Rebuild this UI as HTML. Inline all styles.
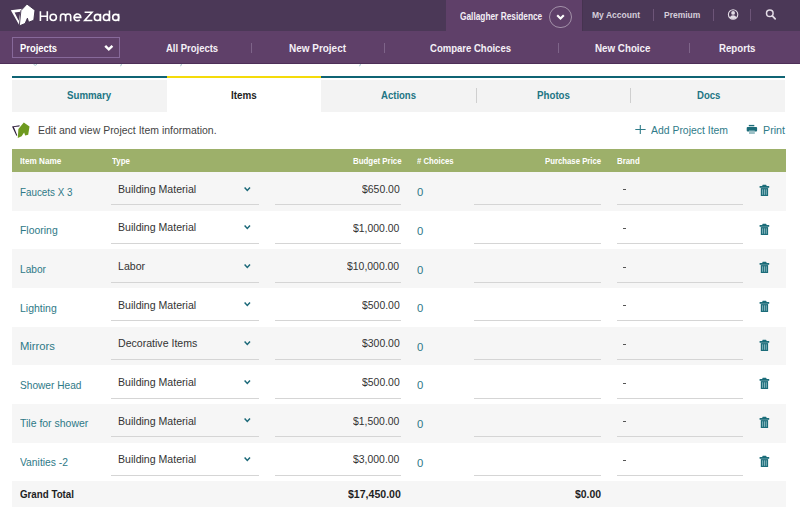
<!DOCTYPE html>
<html><head><meta charset="utf-8">
<style>
*{margin:0;padding:0;box-sizing:border-box}
html,body{width:800px;height:513px;overflow:hidden;background:#fff;font-family:"Liberation Sans",sans-serif}
body{position:relative}
.a{position:absolute}
.t{position:absolute;white-space:nowrap;line-height:normal;transform-origin:0 0}
</style></head><body>

<div class="a" style="left:0px;top:0px;width:800px;height:31px;background:#4b3857;"></div>
<div class="a" style="left:0px;top:31px;width:800px;height:32.5px;background:#5f4069;"></div>
<div class="a" style="left:0px;top:62.5px;width:800px;height:1px;background:#4d2f58;"></div>
<div class="a" style="left:446px;top:0px;width:136px;height:31px;background:#5f4069;"></div>
<svg class="a" style="left:0;top:62px" width="400" height="6" viewBox="0 62 400 6"><g fill="none" stroke="#7fb0ba" stroke-width="0.9" opacity="0.8">
<path d="M33.5 64.3 Q35.2 66.3 37 64.3"/><path d="M121.5 64 L120.6 66.2"/><path d="M181.5 64 L180.6 66.2"/><path d="M360.5 64 L359.6 66.2"/>
</g></svg>
<svg class="a" style="left:0;top:0" width="40" height="31" viewBox="0 0 40 31">
<path fill-rule="evenodd" d="M10.8 10.2 L22.8 8.7 L19.6 25.8 Z M14.6 12.4 L20.4 11.8 L18.7 20.8 Z" fill="#fff"/>
<path d="M20.9 10.6 L27 4.1 L35 10.2 L33.8 20.2 L28.6 22.3 L27.4 18.2 L25.1 23.5 L19.3 25.9 Z" fill="#fff" stroke="#3a2a46" stroke-width="0.9"/>
</svg>
<svg class="a" style="left:30px;top:5px" width="95" height="20" viewBox="30 5 95 20"><g fill="none" stroke="#fff" stroke-width="1.6">
<path d="M40.4 11.3 V20.9 M47.3 11.3 V20.9 M40.4 16.3 H47.3"/>
<circle cx="53.25" cy="17.35" r="3.15"/>
<path d="M60.5 21.2 V16.6 A2.55 2.55 0 0 1 65.6 16.6 V21.2 M65.6 16.6 A2.55 2.55 0 0 1 70.7 16.6 V21.2"/>
<path d="M74.0 17.4 H80.8 A3.4 3.4 0 1 0 79.8 19.8"/>
<path d="M84.6 12.3 H92 L84.7 20.5 H92.4"/>
<circle cx="97.4" cy="17.4" r="3.05"/><path d="M100.45 13.8 V21.2"/>
<circle cx="106.4" cy="17.4" r="3.05"/><path d="M109.45 10.5 V21.2"/>
<circle cx="115.7" cy="17.4" r="3.0"/><path d="M118.6 13.8 V21.2"/>
</g></svg>
<div class="t" style="left:459.50px;top:10.97px;font-size:10.47px;color:#f3eef5;font-weight:bold;transform:scaleX(0.7938)">Gallagher Residence</div>
<div class="a" style="left:549px;top:5.5px;width:22.5px;height:22.5px;border-radius:50%;border:1.3px solid rgba(255,255,255,0.42)"></div>
<svg class="a" style="left:555px;top:13px" width="11" height="9" viewBox="0 0 11 9"><path d="M2.2 2.2 L5.5 5.5 L8.8 2.2" stroke="#fff" stroke-width="2.1" fill="none"/></svg>
<div class="a" style="left:582px;top:0px;width:1px;height:31px;background:#463350;"></div>
<div class="t" style="left:592.10px;top:9.97px;font-size:9.30px;color:#d6cedb;font-weight:bold;transform:scaleX(0.9165)">My Account</div>
<div class="t" style="left:664.20px;top:9.97px;font-size:9.30px;color:#d6cedb;font-weight:bold;transform:scaleX(0.9117)">Premium</div>
<div class="a" style="left:653.3px;top:9px;width:1px;height:12px;background:#6d5578;"></div>
<div class="a" style="left:713.3px;top:9px;width:1px;height:12px;background:#6d5578;"></div>
<div class="a" style="left:750.3px;top:9px;width:1px;height:12px;background:#6d5578;"></div>
<svg class="a" style="left:722px;top:4px" width="60" height="22" viewBox="722 4 60 22">
<circle cx="733.1" cy="14.5" r="4.7" fill="none" stroke="#e3dce6" stroke-width="1.1"/>
<circle cx="733.1" cy="12.9" r="1.9" fill="#e3dce6"/><path d="M729.9 18.3 Q730.2 15.2 733.1 15.2 Q736 15.2 736.3 18.3 Q733.1 19.6 729.9 18.3 Z" fill="#e3dce6"/>
<circle cx="769.8" cy="13.3" r="3.3" fill="none" stroke="#e3dce6" stroke-width="1.5"/><path d="M772.3 15.9 L775.2 18.9" stroke="#e3dce6" stroke-width="1.7" stroke-linecap="round"/>
</svg>
<div class="a" style="left:11.75px;top:37.25px;width:108.5px;height:21px;border:1px solid #87699a"></div>
<div class="t" style="left:19.70px;top:41.62px;font-size:10.90px;color:#fff;font-weight:bold;transform:scaleX(0.8615)">Projects</div>
<svg class="a" style="left:102px;top:43px" width="13" height="10" viewBox="0 0 13 10"><path d="M3.2 2.8 L6.8 6.4 L10.4 2.8" stroke="#fff" stroke-width="2.4" fill="none"/></svg>
<div class="t" style="left:166.00px;top:41.59px;font-size:11.05px;color:#f5f0f7;font-weight:bold;transform:scaleX(0.8575)">All Projects</div>
<div class="t" style="left:288.70px;top:41.59px;font-size:11.05px;color:#f5f0f7;font-weight:bold;transform:scaleX(0.9013)">New Project</div>
<div class="t" style="left:430.00px;top:41.59px;font-size:11.05px;color:#f5f0f7;font-weight:bold;transform:scaleX(0.8622)">Compare Choices</div>
<div class="t" style="left:595.00px;top:41.59px;font-size:11.05px;color:#f5f0f7;font-weight:bold;transform:scaleX(0.8861)">New Choice</div>
<div class="t" style="left:718.50px;top:41.59px;font-size:11.05px;color:#f5f0f7;font-weight:bold;transform:scaleX(0.8741)">Reports</div>
<div class="a" style="left:251px;top:42.5px;width:1px;height:10px;background:#7e6489;"></div>
<div class="a" style="left:384px;top:42.5px;width:1px;height:10px;background:#7e6489;"></div>
<div class="a" style="left:558px;top:42.5px;width:1px;height:10px;background:#7e6489;"></div>
<div class="a" style="left:688.5px;top:42.5px;width:1px;height:10px;background:#7e6489;"></div>
<div class="a" style="left:12px;top:75.9px;width:154.6px;height:2.5px;background:#0f6474;"></div>
<div class="a" style="left:12px;top:80px;width:154.6px;height:32px;background:#f3f3f3;"></div>
<div class="t" style="left:66.80px;top:89.36px;font-size:11.19px;color:#217583;font-weight:bold;transform:scaleX(0.8661)">Summary</div>
<div class="a" style="left:166.6px;top:75.9px;width:154.6px;height:2.5px;background:#f4db0a;"></div>
<div class="a" style="left:166.6px;top:80px;width:154.6px;height:32px;background:#ffffff;"></div>
<div class="t" style="left:231.25px;top:89.36px;font-size:11.19px;color:#1d1d1d;font-weight:bold;transform:scaleX(0.8815)">Items</div>
<div class="a" style="left:321.2px;top:75.9px;width:154.6px;height:2.5px;background:#0f6474;"></div>
<div class="a" style="left:321.2px;top:80px;width:154.6px;height:32px;background:#f3f3f3;"></div>
<div class="t" style="left:381.25px;top:89.36px;font-size:11.19px;color:#217583;font-weight:bold;transform:scaleX(0.8533)">Actions</div>
<div class="a" style="left:475.8px;top:75.9px;width:154.6px;height:2.5px;background:#0f6474;"></div>
<div class="a" style="left:475.8px;top:80px;width:154.6px;height:32px;background:#f3f3f3;"></div>
<div class="t" style="left:537.00px;top:89.36px;font-size:11.19px;color:#217583;font-weight:bold;transform:scaleX(0.8698)">Photos</div>
<div class="a" style="left:630.4px;top:75.9px;width:154.6px;height:2.5px;background:#0f6474;"></div>
<div class="a" style="left:630.4px;top:80px;width:154.6px;height:32px;background:#f3f3f3;"></div>
<div class="t" style="left:696.60px;top:89.36px;font-size:11.19px;color:#217583;font-weight:bold;transform:scaleX(0.8551)">Docs</div>
<div class="a" style="left:475.8px;top:88px;width:1px;height:15px;background:#cfcfcf;"></div>
<div class="a" style="left:630.4px;top:88px;width:1px;height:15px;background:#cfcfcf;"></div>
<svg class="a" style="left:8px;top:116px" width="30" height="28" viewBox="8 116 30 28">
<path d="M18.4 129.1 L23.8 122.5 L29.5 126.4 L28.2 134.8 L25.2 135.6 L24.1 132.4 L21.6 136.2 L17.8 138.1 Z" fill="#6e9a1f"/>
<path d="M12 126.4 L19.7 125.3 L19.3 126.4 L13.9 127.1 L17.3 135.6 L16.4 135.8 Z" fill="#2e1d3b"/>
</svg>
<div class="t" style="left:38.00px;top:123.69px;font-size:10.61px;color:#444444;transform:scaleX(0.9864)">Edit and view Project Item information.</div>
<svg class="a" style="left:634px;top:124px" width="13" height="12" viewBox="0 0 13 12"><path d="M6.3 1 V10 M1.3 5.5 H11.6" stroke="#2f7b89" stroke-width="1.1"/></svg>
<div class="t" style="left:651.00px;top:123.59px;font-size:11.05px;color:#2f7b89;transform:scaleX(0.9432)">Add Project Item</div>
<svg class="a" style="left:742px;top:120px" width="20" height="18" viewBox="742 120 20 18">
<rect x="748.8" y="124.9" width="5.5" height="1.4" fill="#1c6c79"/>
<rect x="746.7" y="127" width="10.4" height="4.6" rx="1" fill="#1c6c79"/>
<rect x="749" y="130.5" width="5.8" height="3.5" fill="#9cc0c6"/>
</svg>
<div class="t" style="left:763.00px;top:123.59px;font-size:11.05px;color:#2f7b89;transform:scaleX(0.9691)">Print</div>
<div class="a" style="left:12px;top:149px;width:773.5px;height:23px;background:#9db06a;"></div>
<div class="t" style="left:19.80px;top:155.44px;font-size:9.45px;color:#ffffff;font-weight:bold;transform:scaleX(0.8660)">Item Name</div>
<div class="t" style="left:111.75px;top:155.44px;font-size:9.45px;color:#ffffff;font-weight:bold;transform:scaleX(0.8430)">Type</div>
<div class="t" style="left:352.50px;top:155.44px;font-size:9.45px;color:#ffffff;font-weight:bold;transform:scaleX(0.8354)">Budget Price</div>
<div class="t" style="left:417.00px;top:155.44px;font-size:9.45px;color:#ffffff;font-weight:bold;transform:scaleX(0.8221)"># Choices</div>
<div class="t" style="left:544.50px;top:155.44px;font-size:9.45px;color:#ffffff;font-weight:bold;transform:scaleX(0.8233)">Purchase Price</div>
<div class="t" style="left:616.80px;top:155.44px;font-size:9.45px;color:#ffffff;font-weight:bold;transform:scaleX(0.8314)">Brand</div>
<div class="a" style="left:12px;top:172px;width:773.5px;height:38.66px;background:#f6f6f6;"></div>
<div class="t" style="left:20.00px;top:185.53px;font-size:11.34px;color:#2e7987;transform:scaleX(0.8680)">Faucets X 3</div>
<div class="t" style="left:117.60px;top:182.62px;font-size:10.90px;color:#333333;transform:scaleX(0.9707)">Building Material</div>
<svg class="a" style="left:243px;top:185.5px" width="9" height="7" viewBox="0 0 9 7"><path d="M1.6 1.6 L4.3 4.4 L7.0 1.6" stroke="#1a6878" stroke-width="1.5" fill="none"/></svg>
<div class="a" style="left:111.25px;top:204.2px;width:148px;height:1px;background:#d5d5d5;"></div>
<div class="t" style="left:361.80px;top:183.85px;font-size:10.32px;color:#333333;transform:scaleX(1.0106)">$650.00</div>
<div class="a" style="left:275px;top:204.2px;width:126px;height:1px;background:#d5d5d5;"></div>
<div class="t" style="left:417.00px;top:187.18px;font-size:10.17px;color:#2e7987;transform:scaleX(1.1157)">0</div>
<div class="a" style="left:474.4px;top:204.2px;width:126.3px;height:1px;background:#d5d5d5;"></div>
<div class="a" style="left:623.3px;top:189.3px;width:2.6px;height:1px;background:#555;"></div>
<div class="a" style="left:617px;top:204.2px;width:126px;height:1px;background:#d5d5d5;"></div>
<svg class="a" style="left:755px;top:183.9px" width="18" height="16" viewBox="755 0 18 16">
<rect x="759.6" y="2" width="9.6" height="1.8" fill="#1b6c79"/><rect x="762.3" y="0.8" width="4.2" height="1.6" rx="0.6" fill="#1b6c79"/>
<rect x="760.8" y="4.1" width="7.3" height="7.9" fill="#1b6c79"/>
<rect x="762.2" y="5.3" width="0.9" height="5.5" fill="#8dbbc2"/><rect x="764.0" y="5.3" width="0.9" height="5.5" fill="#8dbbc2"/><rect x="765.8" y="5.3" width="0.9" height="5.5" fill="#8dbbc2"/>
</svg>
<div class="t" style="left:20.00px;top:224.19px;font-size:11.34px;color:#2e7987;transform:scaleX(0.9211)">Flooring</div>
<div class="t" style="left:117.60px;top:221.28px;font-size:10.90px;color:#333333;transform:scaleX(0.9707)">Building Material</div>
<svg class="a" style="left:243px;top:224.16px" width="9" height="7" viewBox="0 0 9 7"><path d="M1.6 1.6 L4.3 4.4 L7.0 1.6" stroke="#1a6878" stroke-width="1.5" fill="none"/></svg>
<div class="a" style="left:111.25px;top:242.86px;width:148px;height:1px;background:#d5d5d5;"></div>
<div class="t" style="left:353.09px;top:222.51px;font-size:10.32px;color:#333333;transform:scaleX(1.0106)">$1,000.00</div>
<div class="a" style="left:275px;top:242.86px;width:126px;height:1px;background:#d5d5d5;"></div>
<div class="t" style="left:417.00px;top:225.84px;font-size:10.17px;color:#2e7987;transform:scaleX(1.1157)">0</div>
<div class="a" style="left:474.4px;top:242.86px;width:126.3px;height:1px;background:#d5d5d5;"></div>
<div class="a" style="left:623.3px;top:227.96px;width:2.6px;height:1px;background:#555;"></div>
<div class="a" style="left:617px;top:242.86px;width:126px;height:1px;background:#d5d5d5;"></div>
<svg class="a" style="left:755px;top:222.56px" width="18" height="16" viewBox="755 0 18 16">
<rect x="759.6" y="2" width="9.6" height="1.8" fill="#1b6c79"/><rect x="762.3" y="0.8" width="4.2" height="1.6" rx="0.6" fill="#1b6c79"/>
<rect x="760.8" y="4.1" width="7.3" height="7.9" fill="#1b6c79"/>
<rect x="762.2" y="5.3" width="0.9" height="5.5" fill="#8dbbc2"/><rect x="764.0" y="5.3" width="0.9" height="5.5" fill="#8dbbc2"/><rect x="765.8" y="5.3" width="0.9" height="5.5" fill="#8dbbc2"/>
</svg>
<div class="a" style="left:12px;top:249.32px;width:773.5px;height:38.66px;background:#f6f6f6;"></div>
<div class="t" style="left:20.00px;top:262.85px;font-size:11.34px;color:#2e7987;transform:scaleX(0.8958)">Labor</div>
<div class="t" style="left:117.60px;top:259.94px;font-size:10.90px;color:#333333;transform:scaleX(0.9707)">Labor</div>
<svg class="a" style="left:243px;top:262.82px" width="9" height="7" viewBox="0 0 9 7"><path d="M1.6 1.6 L4.3 4.4 L7.0 1.6" stroke="#1a6878" stroke-width="1.5" fill="none"/></svg>
<div class="a" style="left:111.25px;top:281.52px;width:148px;height:1px;background:#d5d5d5;"></div>
<div class="t" style="left:347.30px;top:261.17px;font-size:10.32px;color:#333333;transform:scaleX(1.0106)">$10,000.00</div>
<div class="a" style="left:275px;top:281.52px;width:126px;height:1px;background:#d5d5d5;"></div>
<div class="t" style="left:417.00px;top:264.50px;font-size:10.17px;color:#2e7987;transform:scaleX(1.1157)">0</div>
<div class="a" style="left:474.4px;top:281.52px;width:126.3px;height:1px;background:#d5d5d5;"></div>
<div class="a" style="left:623.3px;top:266.62px;width:2.6px;height:1px;background:#555;"></div>
<div class="a" style="left:617px;top:281.52px;width:126px;height:1px;background:#d5d5d5;"></div>
<svg class="a" style="left:755px;top:261.22px" width="18" height="16" viewBox="755 0 18 16">
<rect x="759.6" y="2" width="9.6" height="1.8" fill="#1b6c79"/><rect x="762.3" y="0.8" width="4.2" height="1.6" rx="0.6" fill="#1b6c79"/>
<rect x="760.8" y="4.1" width="7.3" height="7.9" fill="#1b6c79"/>
<rect x="762.2" y="5.3" width="0.9" height="5.5" fill="#8dbbc2"/><rect x="764.0" y="5.3" width="0.9" height="5.5" fill="#8dbbc2"/><rect x="765.8" y="5.3" width="0.9" height="5.5" fill="#8dbbc2"/>
</svg>
<div class="t" style="left:20.00px;top:301.51px;font-size:11.34px;color:#2e7987;transform:scaleX(0.9261)">Lighting</div>
<div class="t" style="left:117.60px;top:298.60px;font-size:10.90px;color:#333333;transform:scaleX(0.9707)">Building Material</div>
<svg class="a" style="left:243px;top:301.48px" width="9" height="7" viewBox="0 0 9 7"><path d="M1.6 1.6 L4.3 4.4 L7.0 1.6" stroke="#1a6878" stroke-width="1.5" fill="none"/></svg>
<div class="a" style="left:111.25px;top:320.18px;width:148px;height:1px;background:#d5d5d5;"></div>
<div class="t" style="left:361.80px;top:299.83px;font-size:10.32px;color:#333333;transform:scaleX(1.0106)">$500.00</div>
<div class="a" style="left:275px;top:320.18px;width:126px;height:1px;background:#d5d5d5;"></div>
<div class="t" style="left:417.00px;top:303.16px;font-size:10.17px;color:#2e7987;transform:scaleX(1.1157)">0</div>
<div class="a" style="left:474.4px;top:320.18px;width:126.3px;height:1px;background:#d5d5d5;"></div>
<div class="a" style="left:623.3px;top:305.28px;width:2.6px;height:1px;background:#555;"></div>
<div class="a" style="left:617px;top:320.18px;width:126px;height:1px;background:#d5d5d5;"></div>
<svg class="a" style="left:755px;top:299.88px" width="18" height="16" viewBox="755 0 18 16">
<rect x="759.6" y="2" width="9.6" height="1.8" fill="#1b6c79"/><rect x="762.3" y="0.8" width="4.2" height="1.6" rx="0.6" fill="#1b6c79"/>
<rect x="760.8" y="4.1" width="7.3" height="7.9" fill="#1b6c79"/>
<rect x="762.2" y="5.3" width="0.9" height="5.5" fill="#8dbbc2"/><rect x="764.0" y="5.3" width="0.9" height="5.5" fill="#8dbbc2"/><rect x="765.8" y="5.3" width="0.9" height="5.5" fill="#8dbbc2"/>
</svg>
<div class="a" style="left:12px;top:326.64px;width:773.5px;height:38.66px;background:#f6f6f6;"></div>
<div class="t" style="left:20.00px;top:340.17px;font-size:11.34px;color:#2e7987;transform:scaleX(0.9927)">Mirrors</div>
<div class="t" style="left:117.60px;top:337.26px;font-size:10.90px;color:#333333;transform:scaleX(0.9707)">Decorative Items</div>
<svg class="a" style="left:243px;top:340.14px" width="9" height="7" viewBox="0 0 9 7"><path d="M1.6 1.6 L4.3 4.4 L7.0 1.6" stroke="#1a6878" stroke-width="1.5" fill="none"/></svg>
<div class="a" style="left:111.25px;top:358.84px;width:148px;height:1px;background:#d5d5d5;"></div>
<div class="t" style="left:361.80px;top:338.49px;font-size:10.32px;color:#333333;transform:scaleX(1.0106)">$300.00</div>
<div class="a" style="left:275px;top:358.84px;width:126px;height:1px;background:#d5d5d5;"></div>
<div class="t" style="left:417.00px;top:341.82px;font-size:10.17px;color:#2e7987;transform:scaleX(1.1157)">0</div>
<div class="a" style="left:474.4px;top:358.84px;width:126.3px;height:1px;background:#d5d5d5;"></div>
<div class="a" style="left:623.3px;top:343.94px;width:2.6px;height:1px;background:#555;"></div>
<div class="a" style="left:617px;top:358.84px;width:126px;height:1px;background:#d5d5d5;"></div>
<svg class="a" style="left:755px;top:338.54px" width="18" height="16" viewBox="755 0 18 16">
<rect x="759.6" y="2" width="9.6" height="1.8" fill="#1b6c79"/><rect x="762.3" y="0.8" width="4.2" height="1.6" rx="0.6" fill="#1b6c79"/>
<rect x="760.8" y="4.1" width="7.3" height="7.9" fill="#1b6c79"/>
<rect x="762.2" y="5.3" width="0.9" height="5.5" fill="#8dbbc2"/><rect x="764.0" y="5.3" width="0.9" height="5.5" fill="#8dbbc2"/><rect x="765.8" y="5.3" width="0.9" height="5.5" fill="#8dbbc2"/>
</svg>
<div class="t" style="left:20.00px;top:378.83px;font-size:11.34px;color:#2e7987;transform:scaleX(0.8952)">Shower Head</div>
<div class="t" style="left:117.60px;top:375.92px;font-size:10.90px;color:#333333;transform:scaleX(0.9707)">Building Material</div>
<svg class="a" style="left:243px;top:378.8px" width="9" height="7" viewBox="0 0 9 7"><path d="M1.6 1.6 L4.3 4.4 L7.0 1.6" stroke="#1a6878" stroke-width="1.5" fill="none"/></svg>
<div class="a" style="left:111.25px;top:397.5px;width:148px;height:1px;background:#d5d5d5;"></div>
<div class="t" style="left:361.80px;top:377.15px;font-size:10.32px;color:#333333;transform:scaleX(1.0106)">$500.00</div>
<div class="a" style="left:275px;top:397.5px;width:126px;height:1px;background:#d5d5d5;"></div>
<div class="t" style="left:417.00px;top:380.48px;font-size:10.17px;color:#2e7987;transform:scaleX(1.1157)">0</div>
<div class="a" style="left:474.4px;top:397.5px;width:126.3px;height:1px;background:#d5d5d5;"></div>
<div class="a" style="left:623.3px;top:382.6px;width:2.6px;height:1px;background:#555;"></div>
<div class="a" style="left:617px;top:397.5px;width:126px;height:1px;background:#d5d5d5;"></div>
<svg class="a" style="left:755px;top:377.2px" width="18" height="16" viewBox="755 0 18 16">
<rect x="759.6" y="2" width="9.6" height="1.8" fill="#1b6c79"/><rect x="762.3" y="0.8" width="4.2" height="1.6" rx="0.6" fill="#1b6c79"/>
<rect x="760.8" y="4.1" width="7.3" height="7.9" fill="#1b6c79"/>
<rect x="762.2" y="5.3" width="0.9" height="5.5" fill="#8dbbc2"/><rect x="764.0" y="5.3" width="0.9" height="5.5" fill="#8dbbc2"/><rect x="765.8" y="5.3" width="0.9" height="5.5" fill="#8dbbc2"/>
</svg>
<div class="a" style="left:12px;top:403.96px;width:773.5px;height:38.66px;background:#f6f6f6;"></div>
<div class="t" style="left:20.00px;top:417.49px;font-size:11.34px;color:#2e7987;transform:scaleX(0.9240)">Tile for shower</div>
<div class="t" style="left:117.60px;top:414.58px;font-size:10.90px;color:#333333;transform:scaleX(0.9707)">Building Material</div>
<svg class="a" style="left:243px;top:417.46px" width="9" height="7" viewBox="0 0 9 7"><path d="M1.6 1.6 L4.3 4.4 L7.0 1.6" stroke="#1a6878" stroke-width="1.5" fill="none"/></svg>
<div class="a" style="left:111.25px;top:436.16px;width:148px;height:1px;background:#d5d5d5;"></div>
<div class="t" style="left:353.09px;top:415.81px;font-size:10.32px;color:#333333;transform:scaleX(1.0106)">$1,500.00</div>
<div class="a" style="left:275px;top:436.16px;width:126px;height:1px;background:#d5d5d5;"></div>
<div class="t" style="left:417.00px;top:419.14px;font-size:10.17px;color:#2e7987;transform:scaleX(1.1157)">0</div>
<div class="a" style="left:474.4px;top:436.16px;width:126.3px;height:1px;background:#d5d5d5;"></div>
<div class="a" style="left:623.3px;top:421.26px;width:2.6px;height:1px;background:#555;"></div>
<div class="a" style="left:617px;top:436.16px;width:126px;height:1px;background:#d5d5d5;"></div>
<svg class="a" style="left:755px;top:415.86px" width="18" height="16" viewBox="755 0 18 16">
<rect x="759.6" y="2" width="9.6" height="1.8" fill="#1b6c79"/><rect x="762.3" y="0.8" width="4.2" height="1.6" rx="0.6" fill="#1b6c79"/>
<rect x="760.8" y="4.1" width="7.3" height="7.9" fill="#1b6c79"/>
<rect x="762.2" y="5.3" width="0.9" height="5.5" fill="#8dbbc2"/><rect x="764.0" y="5.3" width="0.9" height="5.5" fill="#8dbbc2"/><rect x="765.8" y="5.3" width="0.9" height="5.5" fill="#8dbbc2"/>
</svg>
<div class="t" style="left:20.00px;top:456.15px;font-size:11.34px;color:#2e7987;transform:scaleX(0.9105)">Vanities -2</div>
<div class="t" style="left:117.60px;top:453.24px;font-size:10.90px;color:#333333;transform:scaleX(0.9707)">Building Material</div>
<svg class="a" style="left:243px;top:456.12px" width="9" height="7" viewBox="0 0 9 7"><path d="M1.6 1.6 L4.3 4.4 L7.0 1.6" stroke="#1a6878" stroke-width="1.5" fill="none"/></svg>
<div class="a" style="left:111.25px;top:474.82px;width:148px;height:1px;background:#d5d5d5;"></div>
<div class="t" style="left:353.09px;top:454.47px;font-size:10.32px;color:#333333;transform:scaleX(1.0106)">$3,000.00</div>
<div class="a" style="left:275px;top:474.82px;width:126px;height:1px;background:#d5d5d5;"></div>
<div class="t" style="left:417.00px;top:457.80px;font-size:10.17px;color:#2e7987;transform:scaleX(1.1157)">0</div>
<div class="a" style="left:474.4px;top:474.82px;width:126.3px;height:1px;background:#d5d5d5;"></div>
<div class="a" style="left:623.3px;top:459.92px;width:2.6px;height:1px;background:#555;"></div>
<div class="a" style="left:617px;top:474.82px;width:126px;height:1px;background:#d5d5d5;"></div>
<svg class="a" style="left:755px;top:454.52px" width="18" height="16" viewBox="755 0 18 16">
<rect x="759.6" y="2" width="9.6" height="1.8" fill="#1b6c79"/><rect x="762.3" y="0.8" width="4.2" height="1.6" rx="0.6" fill="#1b6c79"/>
<rect x="760.8" y="4.1" width="7.3" height="7.9" fill="#1b6c79"/>
<rect x="762.2" y="5.3" width="0.9" height="5.5" fill="#8dbbc2"/><rect x="764.0" y="5.3" width="0.9" height="5.5" fill="#8dbbc2"/><rect x="765.8" y="5.3" width="0.9" height="5.5" fill="#8dbbc2"/>
</svg>
<div class="a" style="left:12px;top:481.28px;width:773.5px;height:26.22px;background:#f6f6f6;"></div>
<div class="t" style="left:20.00px;top:488.20px;font-size:11.48px;color:#1f1f1f;font-weight:bold;transform:scaleX(0.8496)">Grand Total</div>
<div class="t" style="left:348.30px;top:488.20px;font-size:11.48px;color:#1f1f1f;font-weight:bold;transform:scaleX(0.9205)">$17,450.00</div>
<div class="t" style="left:574.70px;top:488.20px;font-size:11.48px;color:#1f1f1f;font-weight:bold;transform:scaleX(0.9109)">$0.00</div>
</body></html>
